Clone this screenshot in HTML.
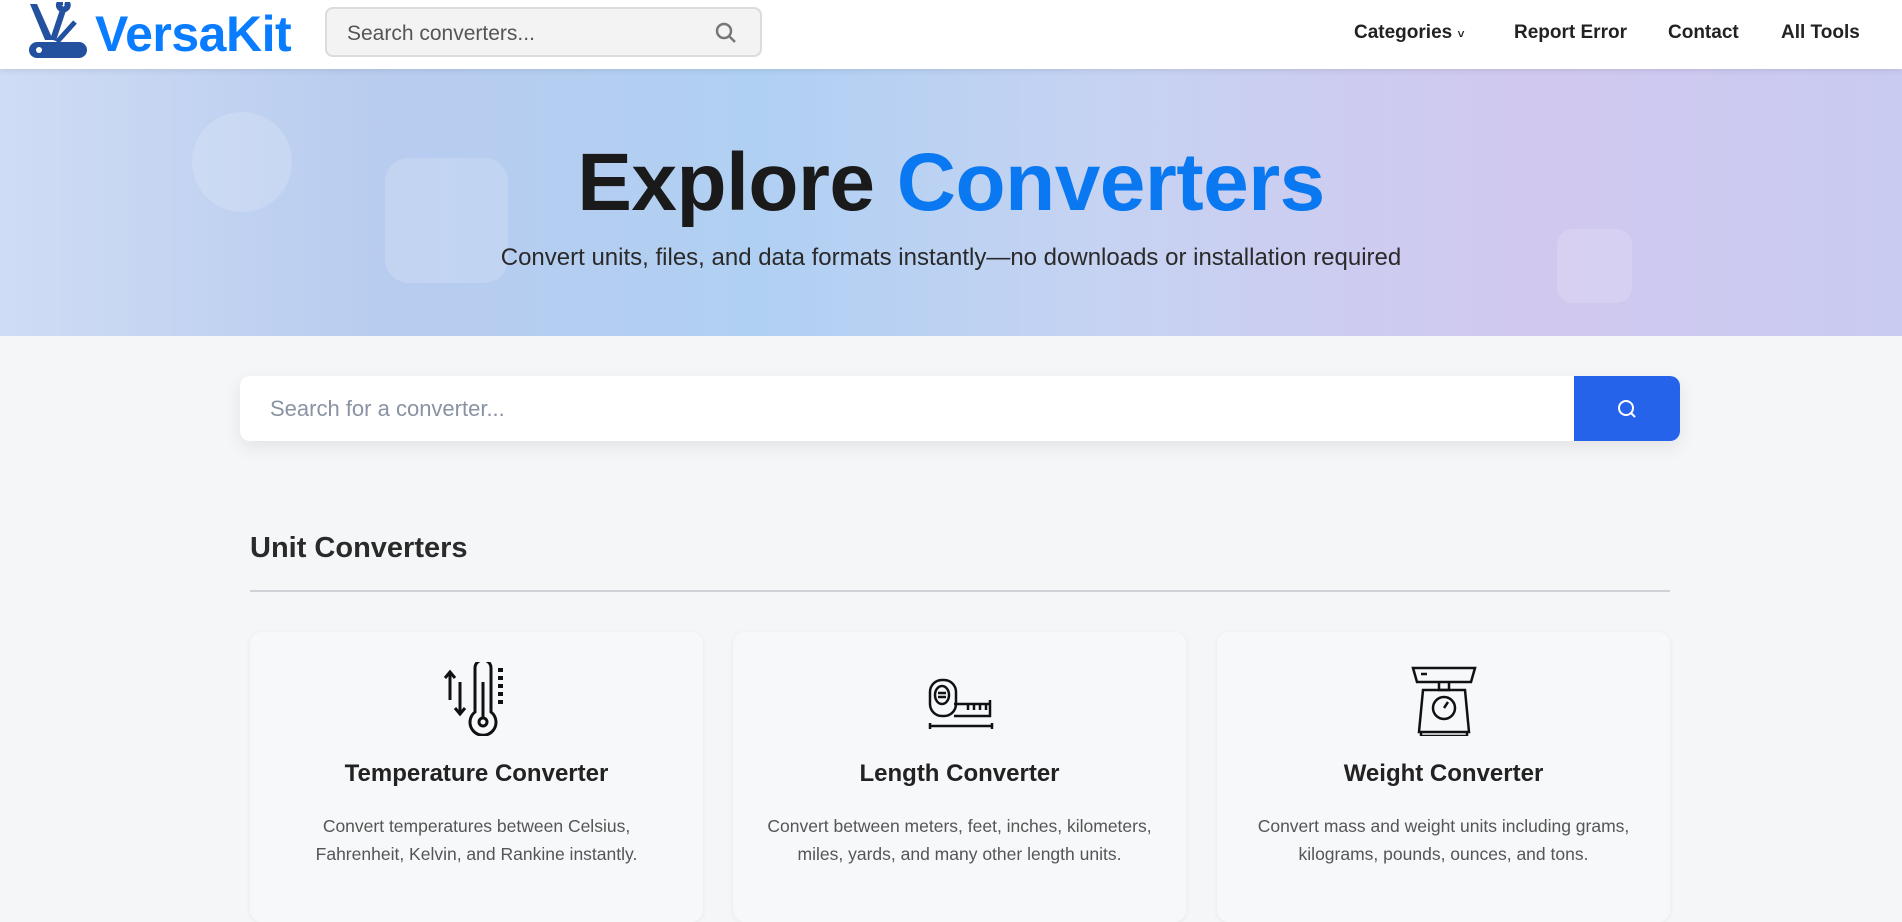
<!DOCTYPE html>
<html><head><meta charset="utf-8"><style>
*{margin:0;padding:0;box-sizing:border-box}
body{width:1902px;height:901px;overflow:hidden;background:#f5f6f8;font-family:"Liberation Sans",sans-serif;color:#222;position:relative}
.nav{position:absolute;left:0;top:0;width:1902px;height:69px;background:#fff;box-shadow:0 2px 6px rgba(0,0,0,.08);z-index:2}
.logo{position:absolute;left:27px;top:2px}
.brand{position:absolute;left:95px;top:5px;font-size:50px;font-weight:bold;color:#0a7cff;letter-spacing:-0.5px}
.nsearch{position:absolute;left:325px;top:7px;width:437px;height:50px;background:#f3f3f3;border:2px solid #dcdcdc;border-radius:8px;font-size:21px;color:#555;padding:13px 0 0 20px}
.nsearch svg{position:absolute;right:22px;top:12px}
.links a{position:absolute;top:22px;font-size:19px;color:#222;text-decoration:none;font-weight:600}
.hero{position:absolute;left:0;top:69px;width:1902px;height:267px;background:linear-gradient(90deg,#cfdcf4 0%,#b8ccef 20%,#b0d0f3 40%,#c6d3f2 58%,#d1c8ef 80%,#c9cbf1 100%)}
.deco{position:absolute;background:rgba(255,255,255,.16)}
h1{position:absolute;left:0;width:1902px;top:136px;text-align:center;font-size:82px;font-weight:900;color:#1a1a1a;letter-spacing:-0.5px}
h1 span{color:#0a78f0}
.sub{position:absolute;left:0;width:1902px;top:244px;text-align:center;font-size:24px;color:#2a2a2a}
.bsearch{position:absolute;left:240px;top:376px;width:1440px;height:65px;background:#fff;border-radius:10px;box-shadow:0 6px 18px rgba(0,0,0,.08);overflow:hidden}
.bsearch .ph{position:absolute;left:30px;top:20px;font-size:22px;color:#8a93a3}
.bsearch .btn{position:absolute;right:0;top:0;width:106px;height:65px;background:#2563eb;display:flex;align-items:center;justify-content:center}
.sec{position:absolute;left:250px;top:532px;font-size:29px;font-weight:600;color:#2a2a2a}
.line{position:absolute;left:250px;top:590px;width:1420px;height:2px;background:#cfd2d6}
.card{position:absolute;top:632px;width:453px;height:290px;background:#f7f8fa;border-radius:12px;box-shadow:0 1px 6px rgba(0,0,0,.06);text-align:center}
.card svg{position:absolute;left:50%;top:30px;transform:translateX(-50%)}
.card h3{position:absolute;left:0;width:100%;top:128px;font-size:24px;font-weight:600;color:#222}
.card p{position:absolute;left:0;width:100%;top:180px;font-size:17.5px;line-height:28px;color:#555}
</style></head><body>
<div class="nav">
<svg class="logo" width="62" height="56" viewBox="0 0 62 56"><path d="M3 2 L18 38 L26 38 L10 2Z" fill="#23519f"/><path d="M26 38 L36 8 M36 8 c-6-3-5-8 0-8 m0 8 c6-2 6-7 2-8" stroke="#23519f" stroke-width="6" fill="none"/><path d="M30 40 L48 20" stroke="#23519f" stroke-width="5"/><rect x="2" y="40" width="58" height="16" rx="8" fill="#23519f"/><circle cx="12" cy="48" r="3" fill="#fff"/></svg>
<div class="brand">VersaKit</div>
<div class="nsearch">Search converters...<svg width="24" height="24" viewBox="0 0 24 24" fill="none" stroke="#777" stroke-width="2.5"><circle cx="10" cy="10" r="7"/><path d="M15 15l6 6"/></svg></div>
<div class="links"><a style="left:1354px">Categories <span style="font-size:12px">&#709;</span></a><a style="left:1514px">Report Error</a><a style="left:1668px">Contact</a><a style="left:1781px">All Tools</a></div>
</div>
<div class="hero">
<div class="deco" style="left:192px;top:43px;width:100px;height:100px;border-radius:50%"></div>
<div class="deco" style="left:385px;top:89px;width:123px;height:125px;border-radius:24px"></div>
<div class="deco" style="left:1557px;top:160px;width:75px;height:74px;border-radius:16px"></div>
</div>
<h1>Explore <span>Converters</span></h1>
<div class="sub">Convert units, files, and data formats instantly—no downloads or installation required</div>
<div class="bsearch"><div class="ph">Search for a converter...</div><div class="btn"><svg width="24" height="24" viewBox="0 0 24 24" fill="none" stroke="#fff" stroke-width="2"><circle cx="11" cy="11" r="7"/><path d="M16 16l4 4"/></svg></div></div>
<div class="sec">Unit Converters</div>
<div class="line"></div>
<div class="card" style="left:250px"><svg width="70" height="74" viewBox="0 0 70 74" fill="none" stroke="#111" stroke-width="3"><path d="M8 10v28M3 16l5-6 5 6M18 20v32M13 46l5 6 5-6"/><path d="M33 6a8 8 0 0116 0v44a13 13 0 11-16 0z"/><circle cx="41" cy="60" r="4"/><path d="M41 20v36"/><path d="M56 8h5M56 16h5M56 24h5M56 32h5M56 40h5" stroke-width="4"/></svg><h3>Temperature Converter</h3><p>Convert temperatures between Celsius,<br>Fahrenheit, Kelvin, and Rankine instantly.</p></div>
<div class="card" style="left:733px"><svg width="72" height="74" viewBox="0 0 72 74" fill="none" stroke="#111" stroke-width="2.5"><rect x="6" y="18" width="26" height="36" rx="12"/><ellipse cx="18" cy="33" rx="7" ry="9"/><path d="M14 31h8M14 35h8"/><path d="M30 42h36v12H30M66 42v-4M44 42v6M50 42v6M56 42v6M62 42v6"/><path d="M6 64h62M6 61v6M68 61v6"/></svg><h3>Length Converter</h3><p>Convert between meters, feet, inches, kilometers,<br>miles, yards, and many other length units.</p></div>
<div class="card" style="left:1217px"><svg width="70" height="74" viewBox="0 0 70 74" fill="none" stroke="#111" stroke-width="2.5"><path d="M4 6h62l-4 14H8z"/><path d="M12 12h6"/><path d="M30 20v8h10v-8"/><path d="M14 28h42l4 42H10z"/><circle cx="35" cy="46" r="11"/><path d="M35 46l4-6"/><path d="M12 70v4h46v-4"/></svg><h3>Weight Converter</h3><p>Convert mass and weight units including grams,<br>kilograms, pounds, ounces, and tons.</p></div>
</body></html>
